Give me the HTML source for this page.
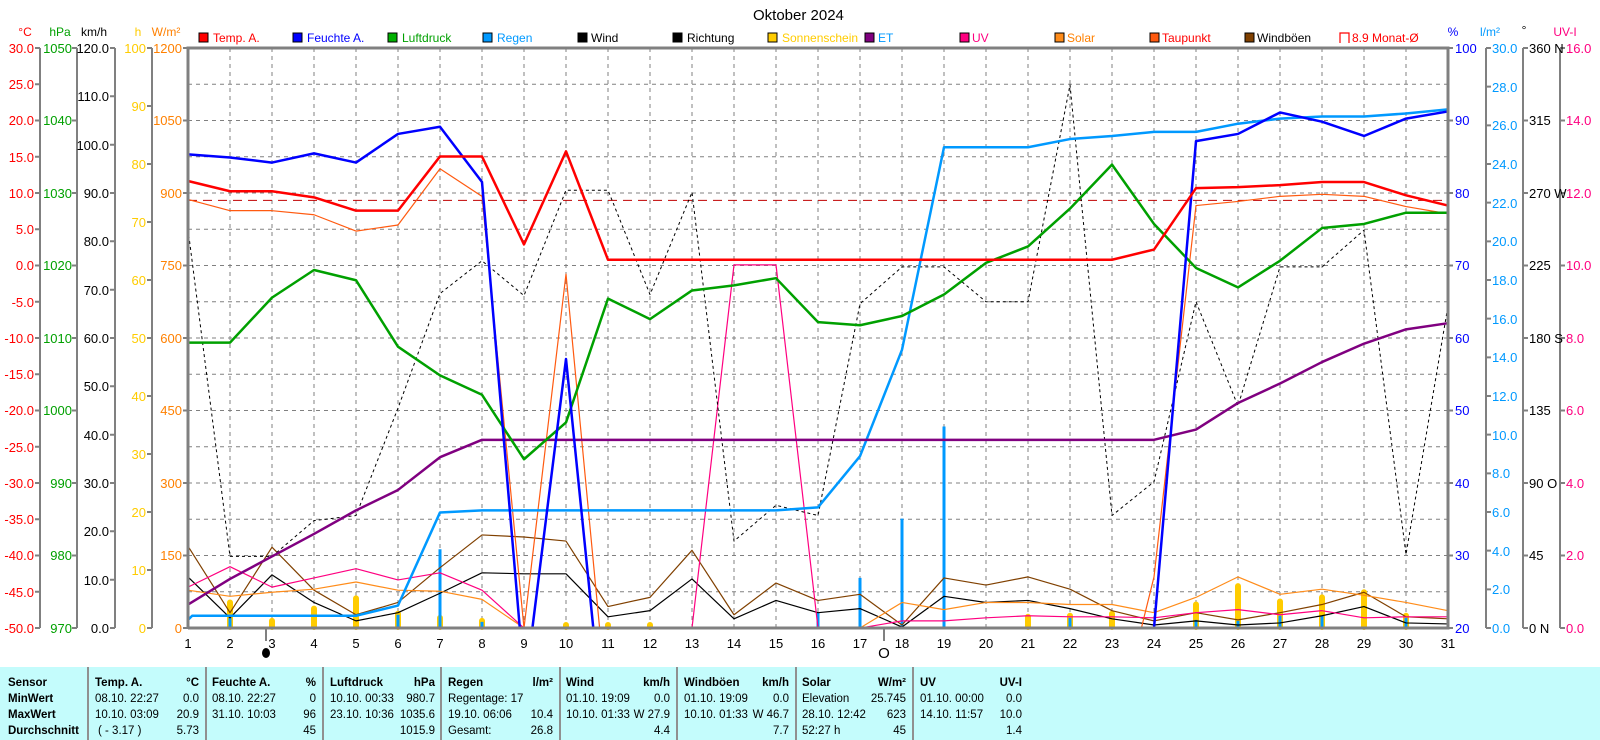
<!DOCTYPE html>
<html><head><meta charset="utf-8"><style>
html,body{margin:0;padding:0;background:#fff;width:1600px;height:740px;overflow:hidden}
svg{display:block;font-family:"Liberation Sans",sans-serif}
</style></head><body>
<svg width="1600" height="740" viewBox="0 0 1600 740" xmlns="http://www.w3.org/2000/svg">
<rect x="0" y="667" width="1600" height="73" fill="#c4fcfc"/>
<g stroke="#909090" stroke-width="2">
<line x1="88" y1="667" x2="88" y2="740"/><line x1="206" y1="667" x2="206" y2="740"/><line x1="323" y1="667" x2="323" y2="740"/><line x1="441" y1="667" x2="441" y2="740"/><line x1="560" y1="667" x2="560" y2="740"/><line x1="677" y1="667" x2="677" y2="740"/><line x1="796" y1="667" x2="796" y2="740"/><line x1="913" y1="667" x2="913" y2="740"/>
</g>
<g font-size="11.5" fill="#000">
<g font-weight="bold"><text x="8" y="686">Sensor</text><text x="8" y="702">MinWert</text><text x="8" y="718">MaxWert</text><text x="8" y="734">Durchschnitt</text></g>
<g font-weight="bold"><text x="95" y="686">Temp. A.</text><text x="212" y="686">Feuchte A.</text><text x="330" y="686">Luftdruck</text><text x="448" y="686">Regen</text><text x="566" y="686">Wind</text><text x="684" y="686">Windböen</text><text x="802" y="686">Solar</text><text x="920" y="686">UV</text></g>
<g font-weight="bold" text-anchor="end"><text x="199" y="686">°C</text><text x="316" y="686">%</text><text x="435" y="686">hPa</text><text x="553" y="686">l/m²</text><text x="670" y="686">km/h</text><text x="789" y="686">km/h</text><text x="906" y="686">W/m²</text><text x="1022" y="686">UV-I</text></g>
<text x="95" y="702">08.10.  22:27</text><text x="95" y="718">10.10.  03:09</text><text x="98" y="734">( - 3.17 )</text>
<text x="212" y="702">08.10.  22:27</text><text x="212" y="718">31.10.  10:03</text>
<text x="330" y="702">10.10.  00:33</text><text x="330" y="718">23.10.  10:36</text>
<text x="448" y="702">Regentage: 17</text><text x="448" y="718">19.10.  06:06</text><text x="448" y="734">Gesamt:</text>
<text x="566" y="702">01.10.  19:09</text><text x="566" y="718">10.10.  01:33</text>
<text x="684" y="702">01.10.  19:09</text><text x="684" y="718">10.10.  01:33</text>
<text x="802" y="702">Elevation</text><text x="802" y="718">28.10.  12:42</text><text x="802" y="734">52:27 h</text>
<text x="920" y="702">01.10.  00:00</text><text x="920" y="718">14.10.  11:57</text>
<g text-anchor="end">
<text x="199" y="702">0.0</text><text x="199" y="718">20.9</text><text x="199" y="734">5.73</text>
<text x="316" y="702">0</text><text x="316" y="718">96</text><text x="316" y="734">45</text>
<text x="435" y="702">980.7</text><text x="435" y="718">1035.6</text><text x="435" y="734">1015.9</text>
<text x="553" y="718">10.4</text><text x="553" y="734">26.8</text>
<text x="670" y="702">0.0</text><text x="670" y="718">W 27.9</text><text x="670" y="734">4.4</text>
<text x="789" y="702">0.0</text><text x="789" y="718">W 46.7</text><text x="789" y="734">7.7</text>
<text x="906" y="702">25.745</text><text x="906" y="718">623</text><text x="906" y="734">45</text>
<text x="1022" y="702">0.0</text><text x="1022" y="718">10.0</text><text x="1022" y="734">1.4</text>
</g></g>

<text x="753" y="20" font-size="15">Oktober 2024</text>
<g font-size="12" stroke="#000" stroke-width="1">
<rect x="199" y="33" width="9" height="9" fill="#ff0000"/><rect x="293" y="33" width="9" height="9" fill="#0000ff"/><rect x="388" y="33" width="9" height="9" fill="#00b000"/><rect x="483" y="33" width="9" height="9" fill="#0099ff"/><rect x="578" y="33" width="9" height="9" fill="#000"/><rect x="673" y="33" width="9" height="9" fill="#000"/><rect x="768" y="33" width="9" height="9" fill="#ffcc00"/><rect x="865" y="33" width="9" height="9" fill="#800080"/><rect x="960" y="33" width="9" height="9" fill="#ff0080"/><rect x="1055" y="33" width="9" height="9" fill="#ff8c1a"/><rect x="1150" y="33" width="9" height="9" fill="#ff5a10"/><rect x="1245" y="33" width="9" height="9" fill="#804000"/>
</g>
<path d="M1340 43 V33 H1349 V43" fill="none" stroke="#ff0000" stroke-width="1.2"/>
<g font-size="12">
<text x="213" y="42" fill="#ff0000">Temp. A.</text><text x="307" y="42" fill="#0000ff">Feuchte A.</text><text x="402" y="42" fill="#00a000">Luftdruck</text><text x="497" y="42" fill="#0099ff">Regen</text><text x="591" y="42">Wind</text><text x="687" y="42">Richtung</text><text x="782" y="42" fill="#ffcc00">Sonnenschein</text><text x="878" y="42" fill="#0099ff">ET</text><text x="972" y="42" fill="#ff0080">UV</text><text x="1067" y="42" fill="#ff8000">Solar</text><text x="1162" y="42" fill="#ff0000">Taupunkt</text><text x="1257" y="42">Windböen</text><text x="1352" y="42" fill="#ff0000">8.9 Monat-Ø</text>
</g>

<g stroke="#808080" stroke-width="1" stroke-dasharray="4,4">
<path d="M188 84.25H1448M188 120.5H1448M188 156.75H1448M188 193H1448M188 229.25H1448M188 265.5H1448M188 301.75H1448M188 338H1448M188 374.25H1448M188 410.5H1448M188 446.75H1448M188 483H1448M188 519.25H1448M188 555.5H1448M188 591.75H1448"/>
<path d="M230 48V628M272 48V628M314 48V628M356 48V628M398 48V628M440 48V628M482 48V628M524 48V628M566 48V628M608 48V628M650 48V628M692 48V628M734 48V628M776 48V628M818 48V628M860 48V628M902 48V628M944 48V628M986 48V628M1028 48V628M1070 48V628M1112 48V628M1154 48V628M1196 48V628M1238 48V628M1280 48V628M1322 48V628M1364 48V628M1406 48V628"/>
</g>

<g stroke="#808080" stroke-width="2" fill="none">
<path d="M40 48V628M77 48V628M115 48V628M152 48V628M1486 48V628M1523 48V628M1560 48V628"/>
<path d="M35 48H40M35 84.25H40M35 120.5H40M35 156.75H40M35 193H40M35 229.25H40M35 265.5H40M35 301.75H40M35 338H40M35 374.25H40M35 410.5H40M35 446.75H40M35 483H40M35 519.25H40M35 555.5H40M35 591.75H40M35 628H40"/>
<path d="M72 48H77M72 120.5H77M72 193H77M72 265.5H77M72 338H77M72 410.5H77M72 483H77M72 555.5H77M72 628H77"/>
<path d="M110 48H115M110 96.3H115M110 144.7H115M110 193H115M110 241.3H115M110 289.7H115M110 338H115M110 386.3H115M110 434.7H115M110 483H115M110 531.3H115M110 579.7H115M110 628H115"/>
<path d="M147 48H152M147 106H152M147 164H152M147 222H152M147 280H152M147 338H152M147 396H152M147 454H152M147 512H152M147 570H152M147 628H152"/>
<path d="M183 48H188M183 120.5H188M183 193H188M183 265.5H188M183 338H188M183 410.5H188M183 483H188M183 555.5H188M183 628H188"/>
<path d="M1448 48H1453M1448 120.5H1453M1448 193H1453M1448 265.5H1453M1448 338H1453M1448 410.5H1453M1448 483H1453M1448 555.5H1453M1448 628H1453"/>
<path d="M1486 48H1491M1486 86.67H1491M1486 125.33H1491M1486 164H1491M1486 202.67H1491M1486 241.33H1491M1486 280H1491M1486 318.67H1491M1486 357.33H1491M1486 396H1491M1486 434.67H1491M1486 473.33H1491M1486 512H1491M1486 550.67H1491M1486 589.33H1491M1486 628H1491"/>
<path d="M1523 48H1528M1523 120.5H1528M1523 193H1528M1523 265.5H1528M1523 338H1528M1523 410.5H1528M1523 483H1528M1523 555.5H1528M1523 628H1528"/>
<path d="M1560 48H1565M1560 120.5H1565M1560 193H1565M1560 265.5H1565M1560 338H1565M1560 410.5H1565M1560 483H1565M1560 555.5H1565M1560 628H1565"/>
</g>

<g font-size="12" text-anchor="middle">
<text x="25" y="36" fill="#ff0000">°C</text><text x="60" y="36" fill="#00a000">hPa</text><text x="94" y="36">km/h</text><text x="138" y="36" fill="#ffcc00">h</text><text x="166" y="36" fill="#ff8000">W/m²</text>
<text x="1453" y="36" fill="#0000ff">%</text><text x="1490" y="36" fill="#0099ff">l/m²</text><text x="1524" y="34">°</text><text x="1565" y="36" fill="#ff0080">UV-I</text>
</g>
<g font-size="13" text-anchor="end">
<g fill="#ff0000"><text x="34" y="53">30.0</text><text x="34" y="89">25.0</text><text x="34" y="125">20.0</text><text x="34" y="162">15.0</text><text x="34" y="198">10.0</text><text x="34" y="234">5.0</text><text x="34" y="270">0.0</text><text x="34" y="307">-5.0</text><text x="34" y="343">-10.0</text><text x="34" y="379">-15.0</text><text x="34" y="415">-20.0</text><text x="34" y="452">-25.0</text><text x="34" y="488">-30.0</text><text x="34" y="524">-35.0</text><text x="34" y="560">-40.0</text><text x="34" y="597">-45.0</text><text x="34" y="633">-50.0</text></g>
<g fill="#00a000"><text x="72" y="53">1050</text><text x="72" y="125">1040</text><text x="72" y="198">1030</text><text x="72" y="270">1020</text><text x="72" y="343">1010</text><text x="72" y="415">1000</text><text x="72" y="488">990</text><text x="72" y="560">980</text><text x="72" y="633">970</text></g>
<g fill="#000"><text x="109" y="53">120.0</text><text x="109" y="101">110.0</text><text x="109" y="150">100.0</text><text x="109" y="198">90.0</text><text x="109" y="246">80.0</text><text x="109" y="295">70.0</text><text x="109" y="343">60.0</text><text x="109" y="391">50.0</text><text x="109" y="440">40.0</text><text x="109" y="488">30.0</text><text x="109" y="536">20.0</text><text x="109" y="585">10.0</text><text x="109" y="633">0.0</text></g>
<g fill="#ffcc00"><text x="146" y="53">100</text><text x="146" y="111">90</text><text x="146" y="169">80</text><text x="146" y="227">70</text><text x="146" y="285">60</text><text x="146" y="343">50</text><text x="146" y="401">40</text><text x="146" y="459">30</text><text x="146" y="517">20</text><text x="146" y="575">10</text><text x="146" y="633">0</text></g>
<g fill="#ff8000"><text x="182" y="53">1200</text><text x="182" y="125">1050</text><text x="182" y="198">900</text><text x="182" y="270">750</text><text x="182" y="343">600</text><text x="182" y="415">450</text><text x="182" y="488">300</text><text x="182" y="560">150</text><text x="182" y="633">0</text></g>
</g>
<g font-size="13">
<g fill="#0000ff"><text x="1455" y="53">100</text><text x="1455" y="125">90</text><text x="1455" y="198">80</text><text x="1455" y="270">70</text><text x="1455" y="343">60</text><text x="1455" y="415">50</text><text x="1455" y="488">40</text><text x="1455" y="560">30</text><text x="1455" y="633">20</text></g>
<g fill="#0099ff"><text x="1492" y="53">30.0</text><text x="1492" y="92">28.0</text><text x="1492" y="130">26.0</text><text x="1492" y="169">24.0</text><text x="1492" y="208">22.0</text><text x="1492" y="246">20.0</text><text x="1492" y="285">18.0</text><text x="1492" y="324">16.0</text><text x="1492" y="362">14.0</text><text x="1492" y="401">12.0</text><text x="1492" y="440">10.0</text><text x="1492" y="478">8.0</text><text x="1492" y="517">6.0</text><text x="1492" y="556">4.0</text><text x="1492" y="594">2.0</text><text x="1492" y="633">0.0</text></g>
<g fill="#000"><text x="1529" y="53">360 N</text><text x="1529" y="125">315</text><text x="1529" y="198">270 W</text><text x="1529" y="270">225</text><text x="1529" y="343">180 S</text><text x="1529" y="415">135</text><text x="1529" y="488">90  O</text><text x="1529" y="560">45</text><text x="1529" y="633">0  N</text></g>
<g fill="#ff0080"><text x="1566" y="53">16.0</text><text x="1566" y="125">14.0</text><text x="1566" y="198">12.0</text><text x="1566" y="270">10.0</text><text x="1566" y="343">8.0</text><text x="1566" y="415">6.0</text><text x="1566" y="488">4.0</text><text x="1566" y="560">2.0</text><text x="1566" y="633">0.0</text></g>
</g>

<g font-size="13" text-anchor="middle">
<text x="188" y="648">1</text><text x="230" y="648">2</text><text x="272" y="648">3</text><text x="314" y="648">4</text><text x="356" y="648">5</text><text x="398" y="648">6</text><text x="440" y="648">7</text><text x="482" y="648">8</text><text x="524" y="648">9</text><text x="566" y="648">10</text><text x="608" y="648">11</text><text x="650" y="648">12</text><text x="692" y="648">13</text><text x="734" y="648">14</text><text x="776" y="648">15</text><text x="818" y="648">16</text><text x="860" y="648">17</text><text x="902" y="648">18</text><text x="944" y="648">19</text><text x="986" y="648">20</text><text x="1028" y="648">21</text><text x="1070" y="648">22</text><text x="1112" y="648">23</text><text x="1154" y="648">24</text><text x="1196" y="648">25</text><text x="1238" y="648">26</text><text x="1280" y="648">27</text><text x="1322" y="648">28</text><text x="1364" y="648">29</text><text x="1406" y="648">30</text><text x="1448" y="648">31</text>
</g>
<line x1="266" y1="628" x2="266" y2="641" stroke="#000"/>
<ellipse cx="266" cy="653" rx="4" ry="5" fill="#000"/>
<line x1="884" y1="628" x2="884" y2="641" stroke="#000"/>
<text x="884" y="658" font-size="15" text-anchor="middle">O</text>

<g transform="matrix(42,0,0,1.023,146,-1.1)" fill="none" stroke-linejoin="round">
<g stroke="#ffcc00" stroke-width="6" stroke-linecap="round">
<path vector-effect="non-scaling-stroke" d="M2 614V590M3 614V608M4 614V596M5 614V586M6 614V601M7 614V605M8 614V608M10 614V612M11 614V612M12 614V612M21 614V604M22 614V603M23 614V601M25 614V592M26 614V574M27 614V589M28 614V585M29 614V580M30 614V603"/>
</g>
<g stroke="#0099ff" stroke-width="3">
<path vector-effect="non-scaling-stroke" d="M2 615V605M6 615V602M7 615V538M8 615V609M16 615V600M17 615V566M18 615V508M19 615V418M22 615V605M25 615V607M26 615V608M27 615V603M28 615V603M30 615V605"/>
</g>
<path vector-effect="non-scaling-stroke" d="M1 197H31" stroke="#c00000" stroke-dasharray="9,6" stroke-width="1"/>
<polyline vector-effect="non-scaling-stroke" stroke="#804000" stroke-width="1.2" points="1,535 2,600 3,536 4,578 5,602 6,590 7,556 8,524 9,526 10,530 11,594 12,585 13,539 14,602 15,571 16,588 17,582 18,612 19,566 20,573 21,565 22,577 23,598 24,608 25,600 26,607 27,600 28,592 29,580 30,604 31,606"/>
<polyline vector-effect="non-scaling-stroke" stroke="#000" stroke-width="1.2" points="1,565 2,605 3,563 4,590 5,608 6,600 7,581 8,561 9,562 10,562 11,604 12,598 13,567 14,606 15,588 16,600 17,596 18,614 19,584 20,590 21,588 22,596 23,606 24,612 25,608 26,612 27,610 28,603 29,594 30,610 31,611"/>
<polyline vector-effect="non-scaling-stroke" stroke="#ff8c1a" stroke-width="1.2" points="1,578 2,584 3,580 4,577 5,570 6,578 7,579 8,587 9,615 17,615 18,590 19,597 20,590 21,590 22,592 23,592 24,600 25,585 26,565 27,582 28,577 29,583 30,590 31,598"/>
<polyline vector-effect="non-scaling-stroke" stroke="#ff0080" stroke-width="1.2" points="1,575 2,555 3,575 4,566 5,557 6,568 7,561 8,578 9,615 13,615 14,260 15,260 16,615 17,615 18,608 19,608 20,605 21,603 22,604 23,604 24,605 25,600 26,597 27,602 28,598 29,605 30,604 31,604"/>
<polyline vector-effect="non-scaling-stroke" stroke="#ff5a10" stroke-width="1.2" points="1,196 2,207 3,207 4,211 5,227 6,221 7,166 8,193 9,615 10,269 10.8,615 23.7,615 24,565 25,202 26,198 27,193 28,191 29,193 30,203 31,210"/>
<polyline vector-effect="non-scaling-stroke" stroke="#000" stroke-width="1" stroke-dasharray="3,3" points="1,225 2,545 3,545 4,510 5,505 6,400 7,288 8,256 9,290 10,187 11,187 12,289 13,189 14,530 15,495 16,505 17,298 18,262 19,262 20,296 21,296 22,84 23,505 24,472 25,296 26,398 27,262 28,262 29,226 30,543 31,300"/>
<polyline vector-effect="non-scaling-stroke" stroke="#0099ff" stroke-width="2.5" points="1,607 1.1,603 2,603 5,603 6,593 7,502 8,500 15,500 16,497 17,447 18,343 19,145 21,145 22,137 23,134 24,130 25,130 26,122 27,117 28,115 29,115 30,112 31,108"/>
<polyline vector-effect="non-scaling-stroke" stroke="#800080" stroke-width="2.5" points="1,592 2,567 3,545 4,523 5,500 6,480 7,448 8,431 24,431 25,421 26,395 27,376 28,355 29,337 30,323 31,317"/>
<polyline vector-effect="non-scaling-stroke" stroke="#00a000" stroke-width="2.5" points="1,336 2,336 3,292 4,265 5,275 6,340 7,368 8,387 9,450 10,414 11,293 12,313 13,285 14,280 15,273 16,316 17,319 18,310 19,289 20,258 21,242 22,205 23,162 24,220 25,263 26,282 27,256 28,224 29,220 30,209 31,209"/>
<polyline vector-effect="non-scaling-stroke" stroke="#0000ff" stroke-width="2.5" points="1,152 2,155 3,160 4,151 5,160 6,132 7,125 8,179 8.9,615 9.2,615 10,352 10.65,615 24,615 25,139 26,132 27,111 28,120 29,134 30,117 31,110"/>
<polyline vector-effect="non-scaling-stroke" stroke="#ff0000" stroke-width="2.5" points="1,178 2,188 3,188 4,194 5,207 6,207 7,154 8,154 9,240 10,149 11,255 23,255 24,245 25,185 26,184 27,182 28,179 29,179 30,192 31,202"/>
</g>

<path d="M188 628V48H1448V628H188" fill="none" stroke="#808080" stroke-width="3"/>
</svg>
</body></html>
